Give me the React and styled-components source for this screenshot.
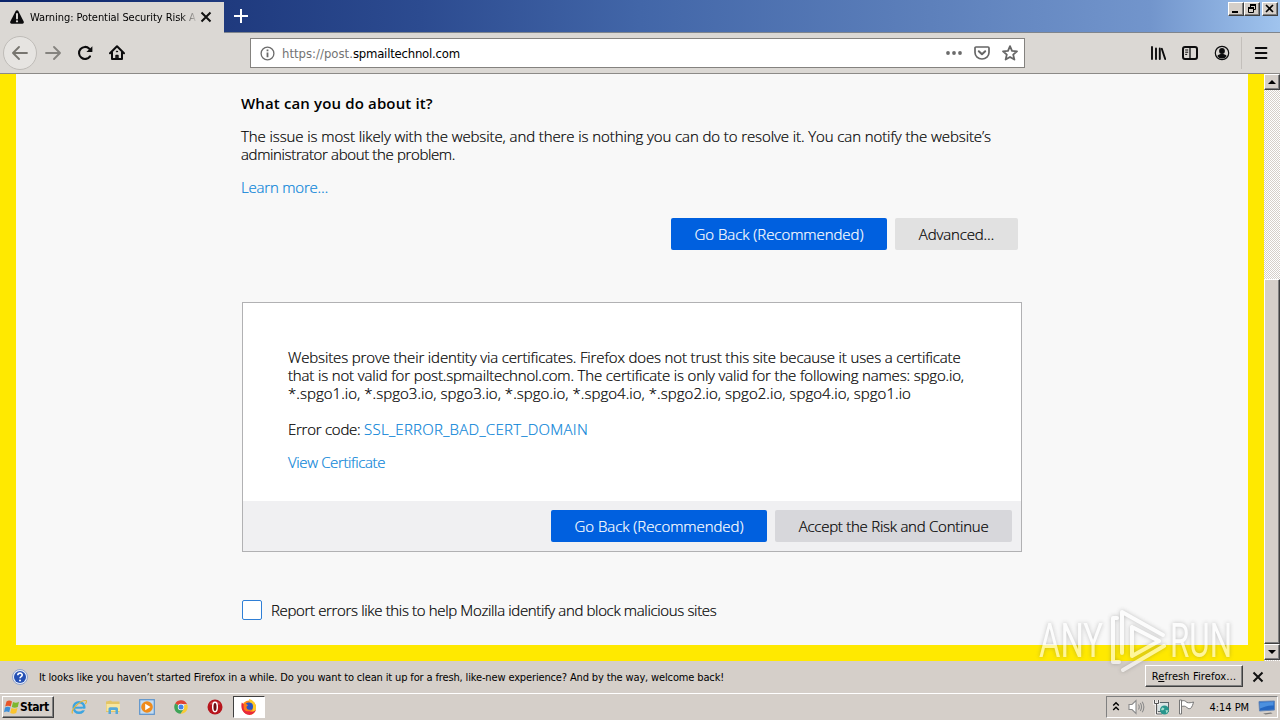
import styled, { createGlobalStyle, css } from "styled-components";

const GlobalStyle = createGlobalStyle`
  * {
    box-sizing: border-box;
  }
  body {
    margin: 0;
    overflow: hidden;
    background: #d5cfc9;
  }
`;

const uiFont = `"DejaVu Sans Condensed", "DejaVu Sans", sans-serif`;
const pageFont = `"Open Sans", "Noto Sans", sans-serif`;

const raised = css`
  border: 1px solid;
  border-color: #fff #404040 #404040 #fff;
  box-shadow: inset -1px -1px 0 #808080;
  background: #d5cfc9;
`;

const Screen = styled.div`
  width: 1280px;
  height: 720px;
  display: flex;
  flex-direction: column;
  position: relative;
  overflow: hidden;
  font-family: ${uiFont};
  font-size: 11px;
  color: #000;
`;

const Label = styled.span`
  white-space: nowrap;
  letter-spacing: ${(p) => p.$spacing || 0}px;
`;

/* title bar */
const TitleBar = styled.div`
  height: 33px;
  display: flex;
  align-items: flex-end;
  background: linear-gradient(
    90deg,
    #0a246a 0,
    #1f3a7e 225px,
    #2c4b90 420px,
    #4266a8 640px,
    #5d80bb 930px,
    #7295cc 1150px,
    #a0c4ee 1280px
  );
`;

const Tab = styled.div`
  width: 224px;
  height: 31px;
  display: flex;
  align-items: center;
  padding: 0 11px 1px 9px;
  background: #dbd8d4;
`;

const TabTitle = styled.div`
  width: 166px;
  margin: 0 4px 0 5px;
  overflow: hidden;
  mask-image: linear-gradient(90deg, #000 150px, transparent 168px);
`;

const TitleRest = styled.div`
  flex: 1;
  height: 33px;
  display: flex;
  justify-content: space-between;
  padding: 2px 2px 0 9px;
  border-bottom: 1px solid #7f858d;
`;

const PlusIcon = styled.svg`
  margin-top: 6px;
`;

const WindowButtons = styled.div`
  display: flex;
`;

const WindowButton = styled.div`
  ${raised}
  width: 16px;
  height: 14px;
  margin-left: ${(p) => p.$gap || 0}px;
  display: flex;
  svg {
    display: block;
  }
`;

/* navigation bar */
const NavBar = styled.div`
  height: 41px;
  display: flex;
  align-items: center;
  padding-left: 3px;
  background: #dbd8d4;
  border-bottom: 1px solid #8c8a87;
`;

const BackButton = styled.div`
  width: 34px;
  height: 34px;
  border-radius: 50%;
  border: 1px solid #bfbcb8;
  background: #e6e4e1;
  display: flex;
  align-items: center;
  justify-content: center;
`;

const NavIcon = styled.svg`
  flex: none;
  margin-left: ${(p) => p.$left || 0}px;
`;

const UrlBar = styled.div`
  width: 775px;
  height: 30px;
  margin-left: 125px;
  padding: 0 6px 0 9px;
  display: flex;
  align-items: center;
  background: #fff;
  border: 1px solid #84827f;
`;

const Url = styled.div`
  flex: 1;
  margin-left: 7px;
  font-size: 13px;
  color: #737373;
  b {
    font-weight: 400;
    color: #000;
    letter-spacing: -0.22px;
  }
`;

const NavDivider = styled.div`
  width: 1px;
  height: 32px;
  margin-left: 11px;
  background: #c3bfbb;
`;

/* web page */
const Viewport = styled.div`
  height: 587px;
  display: flex;
`;

const Page = styled.div`
  flex: 1;
  border: 16px solid #ffe900;
  border-top: 0;
  background: #f8f8f8;
  padding: 20px 226px 0 225px;
  font-family: ${pageFont};
  font-size: 15px;
  font-weight: 300;
  line-height: 18px;
  -webkit-text-stroke-width: 0.2px;
`;

const Heading = styled.h2`
  margin: 0;
  font-size: 15px;
  font-weight: 600;
  line-height: 18px;
  letter-spacing: 0.14px;
  -webkit-text-stroke-width: 0;
`;

const Paragraph = styled.div`
  margin-top: ${(p) => p.$top || 15}px;
  margin-bottom: ${(p) => p.$bottom || 0}px;
  display: flex;
  flex-direction: column;
  align-items: flex-start;
`;

const Link = styled.a`
  color: #0a84d8;
  white-space: nowrap;
  letter-spacing: ${(p) => p.$spacing || 0}px;
`;

const ButtonRow = styled.div`
  display: flex;
  justify-content: flex-end;
  gap: 8px;
  margin: 22px 4px 0 0;
`;

const Button = styled.button`
  width: ${(p) => p.$width}px;
  height: 32px;
  padding: 0 0 1px;
  border: 0;
  border-radius: 2px;
  font: inherit;
  color: ${(p) => (p.$primary ? "#fff" : "#000")};
  background: ${(p) => (p.$primary ? "#0060df" : p.$shade || "#e1e1e1")};
`;

const Panel = styled.div`
  margin: 52px 0 0 1px;
  width: 780px;
  height: 250px;
  display: flex;
  flex-direction: column;
  background: #fff;
  border: 1px solid #b1b1b3;
`;

const PanelBody = styled.div`
  flex: 1;
  padding: 45px 45px 0;
`;

const PanelFooter = styled.div`
  height: 50px;
  display: flex;
  align-items: center;
  justify-content: flex-end;
  gap: 8px;
  padding-right: 9px;
  background: #f0f0f2;
`;

const ReportRow = styled.div`
  display: flex;
  align-items: center;
  margin: 48px 0 0 1px;
`;

const Checkbox = styled.span`
  width: 20px;
  height: 20px;
  margin-right: 9px;
  border: 1px solid #2f7fd6;
  border-radius: 2px;
  background: #fff;
`;

const ScrollBar = styled.div`
  width: 16px;
  display: flex;
  flex-direction: column;
  background: repeating-conic-gradient(#fff 0 25%, #d5cfc9 0 50%) 0 0 / 2px 2px;
`;

const ScrollButton = styled.div`
  ${raised}
  height: 16px;
  display: flex;
  align-items: center;
  justify-content: center;
`;

const ScrollThumb = styled.div`
  ${raised}
  height: 365px;
  margin-top: 189px;
`;

/* notification bar */
const Notice = styled.div`
  height: 32px;
  display: flex;
  align-items: center;
  padding: 0 16px 0 12px;
  background: #d5cfc9;
`;

const NoticeText = styled.div`
  flex: 1;
  margin-left: 11px;
`;

const NoticeButton = styled.div`
  ${raised}
  width: 98px;
  height: 22px;
  margin: 0 9px 2px 0;
  display: flex;
  align-items: center;
  justify-content: center;
`;

/* taskbar */
const TaskBar = styled.div`
  height: 27px;
  display: flex;
  align-items: center;
  padding: 0 2px 0 2px;
  border-top: 1px solid #fff;
  background: #d5cfc9;
`;

const StartButton = styled.div`
  ${raised}
  width: 52px;
  height: 22px;
  display: flex;
  align-items: center;
  padding-left: 1px;
  font-size: 12px;
  font-weight: 700;
`;

const Launcher = styled.div`
  width: 16px;
  height: 18px;
  margin-left: ${(p) => p.$left || 18}px;
  display: flex;
  align-items: center;
`;

const ActiveTask = styled.div`
  width: 32px;
  height: 22px;
  margin-left: 10px;
  display: flex;
  align-items: center;
  justify-content: center;
  background: #fff;
  border: 1px solid;
  border-color: #404040 #fff #fff #404040;
`;

const Tray = styled.div`
  width: 172px;
  height: 22px;
  margin-left: auto;
  display: flex;
  align-items: center;
  justify-content: space-between;
  padding: 0 1px 0 5px;
  border: 1px solid;
  border-color: #808080 #fff #fff #808080;
`;

const Clock = styled.span`
  margin: 0 1px 0 7px;
  white-space: nowrap;
  letter-spacing: -0.05px;
`;

const Watermark = styled.svg`
  position: absolute;
  left: 1030px;
  top: 600px;
  filter: drop-shadow(0 0 2px rgba(90, 90, 90, 0.6));
  opacity: 0.6;
  pointer-events: none;
`;

const WatermarkText = styled.text`
  font-family: Roboto, "Liberation Sans", sans-serif;
  font-weight: 400;
  font-size: 49px;
  fill: #fff;
`;

function Cross({ left }) {
  return (
    <NavIcon $left={left} width="12" height="12" viewBox="0 0 12 12">
      <path d="M1.5 1.5l9 9M10.5 1.5l-9 9" stroke="#111" strokeWidth="2" />
    </NavIcon>
  );
}

function TabStrip() {
  return (
    <TitleBar>
      <Tab>
        <svg width="16" height="16" viewBox="0 0 16 16">
          <path
            d="M8 1.2c.6 0 1 .3 1.3.8l5.4 10.6c.5 1-.2 2.2-1.3 2.2H2.6c-1.1 0-1.8-1.2-1.3-2.2L6.7 2c.3-.5.7-.8 1.3-.8z"
            fill="#0c0c0d"
          />
          <path d="M8 5v4.600" stroke="#dbd8d4" strokeWidth="2" strokeLinecap="round" />
          <circle cx="8" cy="12.300" r="1.150" fill="#dbd8d4" />
        </svg>
        <TabTitle>
          <Label $spacing={-0.06}>Warning: Potential Security Risk Ahead</Label>
        </TabTitle>
        <Cross />
      </Tab>
      <TitleRest>
        <PlusIcon width="16" height="16" viewBox="0 0 16 16">
          <path d="M8 1v14M1 8h14" stroke="#fff" strokeWidth="2" />
        </PlusIcon>
        <WindowButtons>
          <WindowButton>
            <svg width="14" height="12">
              <path d="M3 9h6" stroke="#000" strokeWidth="2" />
            </svg>
          </WindowButton>
          <WindowButton>
            <svg width="14" height="12" fill="none" stroke="#000">
              <path d="M5 1.500h6M5.500 1v4M10.500 1v5.500H9M5 2.500h6" />
              <path d="M3 4.500h6M3 5.500h6M3.500 4v5.500h5V4" />
            </svg>
          </WindowButton>
          <WindowButton $gap={2}>
            <svg width="14" height="12">
              <path d="M3 2l7 7M10 2l-7 7" stroke="#000" strokeWidth="1.600" />
            </svg>
          </WindowButton>
        </WindowButtons>
      </TitleRest>
    </TitleBar>
  );
}

function Navigation() {
  return (
    <NavBar>
      <BackButton>
        <svg width="16" height="16" viewBox="0 0 16 16" fill="none" stroke="#77756f" strokeWidth="1.800" strokeLinecap="round" strokeLinejoin="round">
          <path d="M15 8H1.200M7 2L1 8l6 6" />
        </svg>
      </BackButton>
      <NavIcon $left={8} width="16" height="16" viewBox="0 0 16 16" fill="none" stroke="#85837f" strokeWidth="1.800" strokeLinecap="round" strokeLinejoin="round">
        <path d="M1 8h13.800M9 2l6 6-6 6" />
      </NavIcon>
      <NavIcon $left={16} width="16" height="16" viewBox="0 0 16 16" fill="none">
        <path d="M13 11.300A6 6 0 1 1 12.300 3.700" stroke="#0c0c0d" strokeWidth="2.100" strokeLinecap="round" />
        <path d="M15.400 1.200v5.300a.6.6 0 0 1-.6.6H9.400z" fill="#0c0c0d" />
      </NavIcon>
      <NavIcon $left={16} width="16" height="16" viewBox="0 0 16 16" fill="none" stroke="#0c0c0d" strokeWidth="2" strokeLinejoin="round" strokeLinecap="round">
        <path d="M1 8.300L8 1.300l7 7" />
        <path d="M3 7.500V14h10V7.500" />
        <path d="M7.100 14v-3.500h1.800V14" strokeWidth="1.600" />
        <circle cx="8" cy="6.500" r=".6" fill="#0c0c0d" strokeWidth="1" />
      </NavIcon>
      <UrlBar>
        <svg width="15" height="15" viewBox="0 0 15 15" fill="none" stroke="#6b6b6b">
          <circle cx="7.500" cy="7.500" r="6.400" strokeWidth="1.300" />
          <path d="M7.500 6.600v4.600M7.500 3.400v1.800" strokeWidth="1.800" />
        </svg>
        <Url>
          https://post.<b>spmailtechnol.com</b>
        </Url>
        <NavIcon width="16" height="16" viewBox="0 0 16 16" fill="#6b6b6b">
          <circle cx="2" cy="8" r="1.900" />
          <circle cx="8" cy="8" r="1.900" />
          <circle cx="14" cy="8" r="1.900" />
        </NavIcon>
        <NavIcon $left={12} width="16" height="16" viewBox="0 0 16 16" fill="none" stroke="#666" strokeWidth="2" strokeLinecap="round" strokeLinejoin="round">
          <path d="M2 2h12c.6 0 1 .4 1 1v4.500a7 6.500 0 0 1-14 0V3c0-.6.4-1 1-1z" strokeWidth="1.700" />
          <path d="M4.800 6.200L8 9.300l3.200-3.100" />
        </NavIcon>
        <NavIcon $left={12} width="16" height="16" viewBox="0 0 16 16" fill="none" stroke="#666" strokeWidth="1.800" strokeLinejoin="round">
          <path d="M8 1.200l2 4.600 5 .5-3.800 3.300 1.200 5L8 11.900l-4.400 2.700 1.200-5L1 6.300l5-.5z" />
        </NavIcon>
      </UrlBar>
      <NavIcon $left={125} width="16" height="16" viewBox="0 0 16 16" fill="none" stroke="#0c0c0d" strokeWidth="2" strokeLinecap="round">
        <path d="M2 2v12M6 3.500V14M9.800 3.500V14" strokeWidth="1.900" />
        <path d="M11.800 3.800L15.200 14" strokeWidth="1.900" />
      </NavIcon>
      <NavIcon $left={16} width="16" height="16" viewBox="0 0 16 16" fill="none" stroke="#0c0c0d" strokeWidth="2">
        <rect x="1" y="2" width="14" height="12" rx="2" />
        <path d="M8 2v12" strokeWidth="1.300" />
        <path d="M3.200 5h3M3.200 7.200h3M3.200 9.400h2" strokeWidth="1" />
      </NavIcon>
      <NavIcon $left={16} width="16" height="16" viewBox="0 0 16 16">
        <circle cx="8" cy="8" r="6.700" fill="none" stroke="#0c0c0d" strokeWidth="1.200" />
        <circle cx="8" cy="6" r="2.900" fill="#0c0c0d" />
        <path d="M3.300 11c1-1.600 2.700-2.100 4.700-2.100s3.700.5 4.700 2.100A5.500 5.500 0 0 1 8 13.500 5.500 5.500 0 0 1 3.300 11z" fill="#0c0c0d" />
      </NavIcon>
      <NavDivider />
      <NavIcon $left={11} width="16" height="16" viewBox="0 0 16 16">
        <path d="M2.800 3h10.600M2.800 8h10.600M2.800 13h10.600" stroke="#0c0c0d" strokeWidth="2" strokeLinecap="round" />
      </NavIcon>
    </NavBar>
  );
}

function WarningPage() {
  return (
    <Page>
      <Heading>What can you do about it?</Heading>
      <Paragraph>
        <Label $spacing={-0.096}>
          The issue is most likely with the website, and there is nothing you can do to resolve it. You can notify the
          website’s
        </Label>
        <Label $spacing={-0.36}>administrator about the problem.</Label>
      </Paragraph>
      <Paragraph>
        <Link $spacing={-0.2}>Learn more…</Link>
      </Paragraph>
      <ButtonRow>
        <Button $primary $width={216}>
          <Label $spacing={-0.06}>Go Back (Recommended)</Label>
        </Button>
        <Button $width={123}>
          <Label $spacing={-0.15}>Advanced…</Label>
        </Button>
      </ButtonRow>
      <Panel>
        <PanelBody>
          <Label as="div" $spacing={-0.145}>
            Websites prove their identity via certificates. Firefox does not trust this site because it uses a certificate
          </Label>
          <Label as="div" $spacing={-0.155}>
            that is not valid for post.spmailtechnol.com. The certificate is only valid for the following names: spgo.io,
          </Label>
          <Label as="div" $spacing={0.04}>
            *.spgo1.io, *.spgo3.io, spgo3.io, *.spgo.io, *.spgo4.io, *.spgo2.io, spgo2.io, spgo4.io, spgo1.io
          </Label>
          <Paragraph $top={18} $bottom={15}>
            <span>
              <Label $spacing={-0.25}>Error code: </Label>
              <Link $spacing={0.27}>SSL_ERROR_BAD_CERT_DOMAIN</Link>
            </span>
          </Paragraph>
          <Link $spacing={-0.37}>View Certificate</Link>
        </PanelBody>
        <PanelFooter>
          <Button $primary $width={216}>
            <Label $spacing={-0.06}>Go Back (Recommended)</Label>
          </Button>
          <Button $width={237} $shade="#d7d7db">
            <Label $spacing={-0.25}>Accept the Risk and Continue</Label>
          </Button>
        </PanelFooter>
      </Panel>
      <ReportRow>
        <Checkbox />
        <Label $spacing={-0.345}>Report errors like this to help Mozilla identify and block malicious sites</Label>
      </ReportRow>
    </Page>
  );
}

function NoticeBar() {
  return (
    <Notice>
      <svg width="16" height="16" viewBox="0 0 16 16">
        <circle cx="8" cy="8" r="7.500" fill="#e7edf8" stroke="#7c93c4" strokeWidth=".8" />
        <circle cx="8" cy="8" r="6" fill="#2450b4" />
        <path d="M5.800 6.300C5.800 3.300 10.300 3.500 10.200 6c0 1.600-2.200 1.600-2.200 3.300" fill="none" stroke="#fff" strokeWidth="1.600" />
        <circle cx="8" cy="11.600" r="1" fill="#fff" />
      </svg>
      <NoticeText>
        <Label $spacing={-0.141}>
          It looks like you haven’t started Firefox in a while. Do you want to clean it up for a fresh, like-new
          experience? And by the way, welcome back!
        </Label>
      </NoticeText>
      <NoticeButton>
        <Label $spacing={0.1}>
          R<u>e</u>fresh Firefox…
        </Label>
      </NoticeButton>
      <Cross />
    </Notice>
  );
}

function Taskbar() {
  return (
    <TaskBar>
      <StartButton>
        <svg width="16" height="16" viewBox="0 0 16 16">
          <path d="M2.500 2.500C4.500 1 6.500 1.500 8 2.500L6.700 7.500C5 6.500 3 6.500 1.200 7.500z" fill="#e8562a" />
          <path d="M9 3c1.700 1 4 1 6-.2L13.800 8c-2 1-4.200 1-6 0z" fill="#7db72f" />
          <path d="M1 8.500c1.800-1 3.700-1 5.400 0L5.200 13.300C3.500 12.300 1.500 12.500 0 13.300z" fill="#3d8fd9" />
          <path d="M7.500 9c1.800 1 4 1 6 .1L12.200 14c-1.800 1-4.200.9-6 0z" fill="#fbc42d" />
        </svg>
        <Label $spacing={-0.4}>Start</Label>
      </StartButton>
      <Launcher $left={17}>
        <svg width="16" height="16" viewBox="0 0 16 16" fill="none">
          <circle cx="8" cy="8.500" r="5.300" stroke="#3da5e0" strokeWidth="2.500" />
          <path d="M3.500 8.700h10" stroke="#3da5e0" strokeWidth="2" />
          <path d="M11 10.500h4" stroke="#d5cfc9" strokeWidth="1.600" />
          <path d="M1.500 14.500C-.5 11 9 1 15 1.500c1 .8.200 2.500-.7 3.500" stroke="#e2b73d" strokeWidth="1.200" />
        </svg>
      </Launcher>
      <Launcher>
        <svg width="16" height="16" viewBox="0 0 16 16">
          <path d="M1 2.500l5-1 1 1h7.500V13H1z" fill="#e3c566" />
          <path d="M1.500 5h13.500v7H1.500z" fill="#f7e6a0" />
          <path d="M3.500 15V10c0-1 .7-1.800 1.700-1.800h6.100c1 0 1.700.8 1.700 1.800v5h-2.500v-4H6v4z" fill="#55a9da" />
        </svg>
      </Launcher>
      <Launcher>
        <svg width="16" height="16" viewBox="0 0 16 16">
          <rect x=".7" y=".7" width="14.600" height="14.600" fill="#c4dcf1" stroke="#5b93cc" strokeWidth="1.200" />
          <circle cx="8" cy="8" r="5.800" fill="#ef8b1b" />
          <path d="M6.200 4.700L11.500 8l-5.300 3.300z" fill="#fff" />
        </svg>
      </Launcher>
      <Launcher>
        <svg width="16" height="16" viewBox="0 0 16 16">
          <path d="M8 8L2.200 4.500A6.800 6.800 0 0 1 14 5H8z" fill="#df4334" />
          <path d="M8 8l6-3a6.800 6.800 0 0 1-6.500 9.800L11 9.500z" fill="#f8cb35" />
          <path d="M8 8l3 1.500-3.500 5.300A6.800 6.800 0 0 1 2.200 4.500z" fill="#3fa457" />
          <circle cx="8" cy="8" r="3.200" fill="#fff" />
          <circle cx="8" cy="8" r="2.500" fill="#4384e8" />
        </svg>
      </Launcher>
      <Launcher>
        <svg width="16" height="16" viewBox="0 0 16 16">
          <circle cx="8" cy="8" r="7.500" fill="#b7151c" />
          <path d="M2.500 5.500a6 5 0 0 1 11 0z" fill="#e2646a" opacity=".6" />
          <ellipse cx="8" cy="8" rx="2.300" ry="4.700" fill="#6d0d12" stroke="#fff" strokeWidth="1.500" />
        </svg>
      </Launcher>
      <ActiveTask>
        <svg width="18" height="18" viewBox="0 0 18 18">
          <circle cx="9" cy="9.500" r="7" fill="#ff8a16" />
          <path d="M9 1c4 1 7 4 7 8.500S13 17 9 17c3-2 4.500-5 3.500-8S9 5 9 1z" fill="#ffc928" />
          <path d="M1.800 4.500C.5 9 2 15 8 16.800c4 .7 7-1.800 8-5-2 2-5 2.500-7.500 1C6 11.500 5 9 6 7.500L3.500 6z" fill="#e8283c" />
          <circle cx="9" cy="8.500" r="4" fill="#2b55c4" />
          <path d="M3.500 6.500c2-1 4-.3 4.500 1-1.500.5-2 1.500-1 3.200 1 1.300 3 1.300 4.300.8-1.500 2.500-6 2.500-7.500-.5z" fill="#ff7a18" />
        </svg>
      </ActiveTask>
      <Tray>
        <svg width="8" height="14" viewBox="0 0 8 14" fill="none" stroke="#000" strokeWidth="1.400">
          <path d="M1.200 5.500L4 2.700l2.800 2.800M1.200 10L4 7.200 6.800 10" />
        </svg>
        <svg width="17" height="16" viewBox="0 0 17 16" fill="none" stroke="#8b8b8b" strokeWidth="1.100">
          <path d="M1 5.500h3l4-4v13l-4-4H1z" fill="#fff" />
          <path d="M10.500 5.500q1.500 2.500 0 5M12.300 4q2.500 4 0 8M14.200 2.700q3.300 5.300 0 10.600" />
        </svg>
        <svg width="17" height="17" viewBox="0 0 17 17">
          <rect x="4.500" y="3.500" width="11" height="9" fill="#d9e4e4" stroke="#58656a" />
          <path d="M1.500 1v3.500h4V1M3.500 4.500V15H9" fill="none" stroke="#f7f7f7" strokeWidth="2.500" />
          <path d="M1.500 1v3.500h4V1M3.500 4.500V15H9" fill="none" stroke="#555" strokeWidth="1" />
          <circle cx="11.500" cy="11" r="4.500" fill="#27958c" />
          <path d="M9 8.500c2 0 3 1 2 2s-2 1-3 .5zM12.500 11l3 .5-2 3z" fill="#a3dccb" />
        </svg>
        <svg width="17" height="16" viewBox="0 0 17 16" fill="#fff" stroke="#777" strokeWidth="1">
          <path d="M3.500 2c2.500-1 4 0 5.500 1.500 2 .5 4 .3 6.500-.5-.5 2.500-1.500 5-3 6.500-2 .5-3 0-4-1.500-1.500-1-3-1-5-.5z" />
          <path d="M1.500 1h2v14h-2z" />
        </svg>
        <Clock>4:14 PM</Clock>
        <svg width="18" height="16" viewBox="0 0 18 16">
          <path d="M1 2.500l15.500-.5v9L1.500 12z" fill="#2467c2" stroke="#6487b8" />
          <path d="M2 3.500l13.500-.5v3.500C10 6 6 8 2 9.500z" fill="#4b90df" />
          <path d="M5 14.500l8-1 1.500 1-7 1z" fill="#777" />
        </svg>
      </Tray>
    </TaskBar>
  );
}

function AnyRunMark() {
  return (
    <Watermark width="240" height="80" viewBox="0 0 240 80">
      <WatermarkText x="9" y="57" textLength="64" lengthAdjust="spacingAndGlyphs">
        ANY
      </WatermarkText>
      <WatermarkText x="140" y="57" textLength="62" lengthAdjust="spacingAndGlyphs">
        RUN
      </WatermarkText>
      <g fill="none" stroke="#fff" strokeWidth="4" strokeLinejoin="round" strokeLinecap="round">
        <path d="M92 53V12l41 23" />
        <path d="M87 18h-4v44h6" />
        <path d="M102 27v29l27-15M102 27l27 14M93 70l41-24" />
      </g>
    </Watermark>
  );
}

function App() {
  return (
    <>
      <GlobalStyle />
      <Screen>
        <TabStrip />
        <Navigation />
        <Viewport>
          <WarningPage />
          <ScrollBar>
            <ScrollButton>
              <svg width="8" height="4">
                <path d="M0 4h8L4 0z" />
              </svg>
            </ScrollButton>
            <ScrollThumb />
            <ScrollButton>
              <svg width="8" height="4">
                <path d="M0 0h8L4 4z" />
              </svg>
            </ScrollButton>
          </ScrollBar>
        </Viewport>
        <NoticeBar />
        <Taskbar />
        <AnyRunMark />
      </Screen>
    </>
  );
}

export default App;
